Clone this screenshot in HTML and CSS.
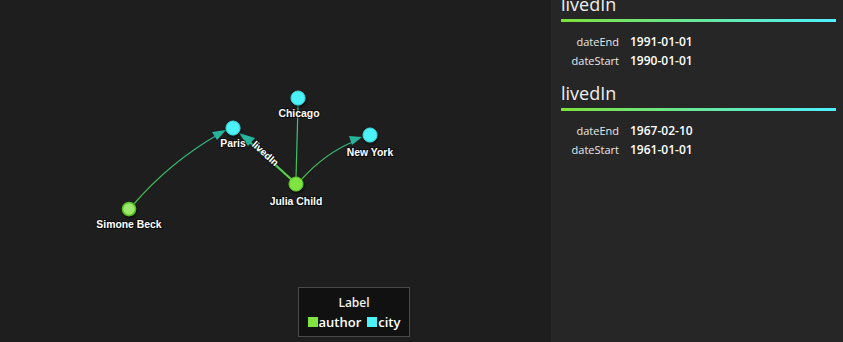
FILE: index.html
```html
<!DOCTYPE html>
<html>
<head lang="en">
    <meta charset="UTF-8">
    <title>graph</title>
    <link rel="stylesheet" href="styles.css">
</head>
<body>
<div class="app">
    <div class="graph">
        <svg class="canvas" width="551" height="342" viewBox="0 0 551 342">
            <defs>
                <linearGradient id="g1" gradientUnits="userSpaceOnUse" x1="129" y1="209" x2="233" y2="128">
                    <stop offset="0" stop-color="#4cc040"/>
                    <stop offset="1" stop-color="#26b39a"/>
                </linearGradient>
                <linearGradient id="g2" gradientUnits="userSpaceOnUse" x1="296" y1="184" x2="233" y2="128">
                    <stop offset="0" stop-color="#62d23a"/>
                    <stop offset="1" stop-color="#28b89c"/>
                </linearGradient>
                <linearGradient id="g3" gradientUnits="userSpaceOnUse" x1="296" y1="184" x2="298" y2="98">
                    <stop offset="0" stop-color="#4cc040"/>
                    <stop offset="1" stop-color="#26c0b0"/>
                </linearGradient>
                <linearGradient id="g4" gradientUnits="userSpaceOnUse" x1="296" y1="184" x2="370" y2="135">
                    <stop offset="0" stop-color="#4cc040"/>
                    <stop offset="1" stop-color="#26b39a"/>
                </linearGradient>
                <filter id="shadow" x="-50%" y="-50%" width="200%" height="200%">
                    <feDropShadow dx="1" dy="2" stdDeviation="1.5" flood-color="#000" flood-opacity="0.6"/>
                </filter>
            </defs>

            <!-- edges -->
            <path class="edge" d="M133,205 Q170,162 219,134" stroke="url(#g1)"/>
            <polygon class="arrow" points="226,130 212,132 217,140"/>

            <path class="edge edge-hover" d="M292,180 Q268,158 246,139" stroke="url(#g2)"/>
            <polygon class="arrow" points="239,133 255,138 248,146"/>

            <path class="edge" d="M296,178 Q297,140 298,106" stroke="url(#g3)"/>

            <path class="edge" d="M301,180 Q325,153 355,141" stroke="url(#g4)"/>
            <polygon class="arrow" points="362,137 349,136 352,145"/>

            <text class="edge-label" transform="translate(263,156) rotate(42)">livedIn</text>

            <!-- nodes -->
            <circle class="node author soft" cx="129" cy="209" r="6.5" filter="url(#shadow)"/>
            <circle class="node city" cx="233" cy="128" r="7" filter="url(#shadow)"/>
            <circle class="node city" cx="298" cy="98" r="7" filter="url(#shadow)"/>
            <circle class="node city" cx="370" cy="135" r="7" filter="url(#shadow)"/>
            <circle class="node author" cx="296" cy="184" r="7" filter="url(#shadow)"/>

            <text class="node-label" x="129" y="228">Simone Beck</text>
            <text class="node-label" x="233" y="147">Paris</text>
            <text class="node-label" x="299" y="117">Chicago</text>
            <text class="node-label" x="370" y="156">New York</text>
            <text class="node-label" x="296" y="205">Julia Child</text>
        </svg>

        <div class="legend">
            <div class="legend-title">Label</div>
            <div class="legend-items">
                <span class="sw sw-author"></span><span>author</span>
                <span class="sw sw-city"></span><span>city</span>
            </div>
        </div>
    </div>

    <div class="panel">
        <div class="props">
            <div class="section">
                <h2>livedIn</h2>
                <div class="rule"></div>
                <div class="rows">
                    <span class="key">dateEnd</span><span class="val">1991-01-01</span>
                    <span class="key">dateStart</span><span class="val">1990-01-01</span>
                </div>
            </div>
            <div class="section">
                <h2>livedIn</h2>
                <div class="rule"></div>
                <div class="rows">
                    <span class="key">dateEnd</span><span class="val">1967-02-10</span>
                    <span class="key">dateStart</span><span class="val">1961-01-01</span>
                </div>
            </div>
        </div>
    </div>
</div>
</body>
</html>
```

FILE: styles.css
```css
* {
    margin: 0;
    padding: 0;
    box-sizing: border-box;
}

html, body {
    width: 843px;
    height: 342px;
    overflow: hidden;
    background-color: #1e1e1e;
}

.app {
    display: flex;
    width: 843px;
    height: 342px;
}

/* graph area */
.graph {
    position: relative;
    width: 551px;
    height: 342px;
    background-color: #1e1e1e;
}

.canvas {
    display: block;
}

.edge {
    fill: none;
    stroke-width: 1.2;
}

.edge-hover {
    stroke-width: 2.2;
}

.arrow {
    fill: #27b59e;
}

.node {
    stroke-width: 1;
}

.node.author {
    fill: #7fe43f;
    stroke: #5cc42a;
}

.node.author.soft {
    fill: #9ce86c;
    stroke: #56c024;
    stroke-width: 1.5;
}

.node.city {
    fill: #4cf2f7;
    stroke: #3ad8de;
}

.node-label,
.edge-label {
    font-family: "Liberation Sans", Arial, sans-serif;
    font-weight: bold;
    font-size: 10.4px;
    fill: #fff;
    text-anchor: middle;
    paint-order: stroke;
    stroke: rgba(0, 0, 0, 0.55);
    stroke-width: 2px;
}

.edge-label {
    font-size: 10px;
}

/* legend box */
.legend {
    position: absolute;
    left: 298px;
    top: 287px;
    width: 112px;
    height: 50px;
    background-color: #111;
    border: 1px solid #4a4a4a;
    font-family: "Open Sans", sans-serif;
    color: #fff;
    padding-top: 7px;
}

.legend-title {
    text-align: center;
    font-size: 12px;
    font-weight: 600;
    line-height: 16px;
    color: #eee;
}

.legend-items {
    display: flex;
    align-items: center;
    justify-content: center;
    font-size: 13px;
    font-weight: 600;
    line-height: 18px;
    margin-top: 2px;
}

.sw {
    width: 10px;
    height: 10px;
    margin-right: 1px;
}

.sw-author {
    background-color: #7fe43f;
}

.sw-city {
    background-color: #4cf2f7;
    margin-left: 6px;
}

/* properties panel */
.panel {
    flex: 1;
    height: 342px;
    background-color: #262626;
    overflow: hidden;
    padding: 0 7px 0 10px;
    font-family: "Open Sans", sans-serif;
}

.props {
    margin-top: -7px;
}

.section + .section {
    margin-top: 12px;
}

.section h2 {
    font-size: 18px;
    font-weight: normal;
    line-height: 22px;
    color: #f0f0f0;
}

.rule {
    height: 3px;
    margin-top: 4px;
    background: linear-gradient(to right, #7de13b, #4ff0ff);
}

.rows {
    display: grid;
    grid-template-columns: 58px 1fr;
    column-gap: 11px;
    margin-top: 10px;
    line-height: 19px;
}

.key {
    text-align: right;
    font-size: 11px;
    color: #e8e8e8;
}

.val {
    font-size: 12px;
    font-weight: 600;
    color: #fff;
}
```
